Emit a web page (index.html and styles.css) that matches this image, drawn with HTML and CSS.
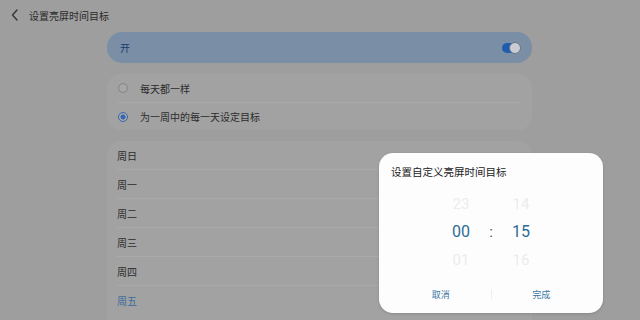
FILE: index.html
```html
<!DOCTYPE html>
<html lang="zh-CN">
<head>
<meta charset="utf-8">
<link rel="stylesheet" href="styles.css">
</head>
<body>
<div class="page">
  <header class="topbar">
    <svg class="back" width="8" height="12" viewBox="0 0 8 12"><path d="M6 1 L1.5 6 L6 11" fill="none" stroke="#333" stroke-width="1.3" stroke-linecap="round" stroke-linejoin="round"/></svg>
    <span class="title">设置亮屏时间目标</span>
  </header>
  <main class="content">
    <div class="card master">
      <span class="master-label">开</span>
      <span class="toggle"><span class="knob"></span></span>
    </div>
    <div class="card options">
      <div class="opt"><span class="radio"></span><span>每天都一样</span></div>
      <div class="opt"><span class="radio on"></span><span>为一周中的每一天设定目标</span></div>
    </div>
    <div class="card days">
      <div class="day">周日</div>
      <div class="day">周一</div>
      <div class="day">周二</div>
      <div class="day">周三</div>
      <div class="day">周四</div>
      <div class="day sel">周五</div>
    </div>
  </main>
  <div class="dialog">
    <div class="dlg-title">设置自定义亮屏时间目标</div>
    <div class="picker">
      <div class="col">
        <div class="num faded">23</div>
        <div class="num cur">00</div>
        <div class="num faded">01</div>
      </div>
      <div class="colon">:</div>
      <div class="col">
        <div class="num faded">14</div>
        <div class="num cur">15</div>
        <div class="num faded">16</div>
      </div>
    </div>
    <div class="actions">
      <span class="btn">取消</span>
      <span class="sep"></span>
      <span class="btn">完成</span>
    </div>
  </div>
</div>
</body>
</html>
```
FILE: styles.css
```css
html, body {
  margin: 0;
  padding: 0;
  background: #9e9e9e;
  font-family: "Noto Sans CJK SC", "Noto Sans", sans-serif;
  color: #2c2c2c;
}
.page {
  position: relative;
  width: 640px;
  height: 320px;
  overflow: hidden;
}
.topbar {
  height: 30px;
  display: flex;
  align-items: center;
  padding-left: 11px;
  gap: 10px;
}
.back { display: block; }
.title {
  font-size: 10px;
  color: #2a2a2a;
}
.content {
  margin-left: 107px;
  width: 425px;
  padding-top: 2px;
  display: flex;
  flex-direction: column;
  gap: 11px;
}
.card {
  border-radius: 14px;
  background: #a2a2a2;
}
.master {
  height: 31px;
  background: #7a8ea5;
  border-radius: 15px;
  display: flex;
  align-items: center;
  justify-content: space-between;
  padding: 0 12px 0 13px;
}
.master-label {
  font-size: 10px;
  color: #1d3e6b;
}
.toggle {
  position: relative;
  width: 18px;
  height: 10px;
  border-radius: 5px;
  background: #1f5cb0;
}
.knob {
  position: absolute;
  right: -1px;
  top: -1px;
  width: 10px;
  height: 10px;
  border-radius: 50%;
  background: #c9ccd0;
  border: 1px solid #6a7585;
}
.options {
  padding: 0 12px 0 11px;
}
.opt {
  height: 28px;
  display: flex;
  align-items: center;
  gap: 12px;
  font-size: 10px;
  color: #2c2c2c;
}
.opt + .opt { border-top: 1px solid #aaaaaa; height: 27px; }
.radio {
  box-sizing: border-box;
  width: 10px;
  height: 10px;
  border-radius: 50%;
  border: 1px solid #848484;
  background: #a6a6a6;
}
.radio.on {
  border: 1.5px solid #3a68b0;
  background: radial-gradient(circle, #3a68b0 0 2.3px, #a6a6a6 2.8px);
}
.days {
  padding: 0 12px 0 10px;
  height: 200px;
}
.day {
  height: 28px;
  display: flex;
  align-items: center;
  font-size: 10px;
  color: #2c2c2c;
}
.day + .day { border-top: 1px solid #a9a9a9; height: 28px; }
.day.sel { color: #3c6c9e; }
.dialog {
  position: absolute;
  left: 379px;
  top: 153px;
  width: 224px;
  height: 160px;
  background: #fdfdfd;
  border-radius: 14px;
  box-shadow: 0 1px 3px rgba(0,0,0,0.15);
  display: flex;
  flex-direction: column;
}
.dlg-title {
  font-size: 10.5px;
  color: #222;
  padding: 12px 0 0 12px;
  height: 24px;
  line-height: 14px;
}
.picker {
  display: flex;
  justify-content: center;
  align-items: center;
  margin-top: 1px;
}
.col {
  width: 40px;
  display: flex;
  flex-direction: column;
  align-items: center;
}
.num {
  height: 28px;
  line-height: 28px;
  font-size: 16px;
  font-family: "Roboto", "Noto Sans", sans-serif;
}
.num.faded { color: #ececec; font-size: 15px; }
.num.cur { color: #2d6b94; }
.colon {
  width: 20px;
  text-align: center;
  font-size: 15px;
  color: #555;
  font-family: "Roboto", sans-serif;
}
.actions {
  margin-top: 14px;
  display: flex;
  align-items: center;
  padding: 0 12px;
}
.btn {
  font-size: 9px;
  color: #3a77a6;
  width: 100px;
  text-align: center;
}
.sep {
  width: 1px;
  height: 10px;
  background: #eeeeee;
}
```
